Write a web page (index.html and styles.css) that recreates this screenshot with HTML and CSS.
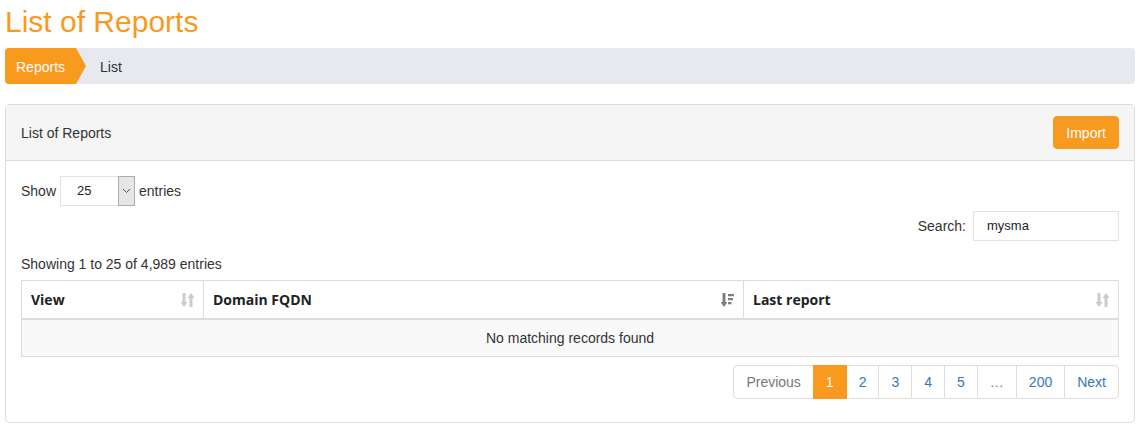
FILE: index.html
```html
<!DOCTYPE html>
<html>
<head>
<meta charset="utf-8">
<link rel="stylesheet" href="styles.css">
</head>
<body>
<div class="page">
  <h1 class="title">List of Reports</h1>
  <div class="crumbs">
    <span class="crumb-active">Reports</span>
    <span class="crumb">List</span>
  </div>
  <div class="panel">
    <div class="panel-head">
      <span class="panel-title">List of Reports</span>
      <button class="btn-import">Import</button>
    </div>
    <div class="panel-body">
      <div class="length-row">
        <span>Show</span>
        <div class="fake-select">
          <span class="sel-val">25</span>
          <span class="sel-arrow"><svg width="9" height="6" viewBox="0 0 9 6"><path d="M1 1 L4.5 4.5 L8 1" fill="none" stroke="#555" stroke-width="1"/></svg></span>
        </div>
        <span>entries</span>
      </div>
      <div class="search-row">
        <label class="search-label">Search:</label>
        <div class="search-input">mysma</div>
      </div>
      <div class="info">Showing 1 to 25 of 4,989 entries</div>
      <table class="grid">
        <thead>
          <tr>
            <th class="c1"><div class="th-in"><span>View</span>
              <svg class="sort both" width="13" height="14" viewBox="0 0 13 14"><path d="M1.5 0h3v9h2l-3.5 5l-3.5-5h2z M8.5 14h3V5h2l-3.5-5l-3.5 5h2z" fill="#000"/></svg></div></th>
            <th class="c2"><div class="th-in"><span>Domain FQDN</span>
              <svg class="sort desc" width="13" height="14" viewBox="0 0 13 14"><path d="M1.5 0h3v9h2l-3.5 5l-3.5-5h2z M7 1h6v2.2H7z M7 5h5v2.2H7z M7 9h3.5v2.2H7z" fill="#000"/></svg></div></th>
            <th class="c3"><div class="th-in"><span>Last report</span>
              <svg class="sort both" width="13" height="14" viewBox="0 0 13 14"><path d="M1.5 0h3v9h2l-3.5 5l-3.5-5h2z M8.5 14h3V5h2l-3.5-5l-3.5 5h2z" fill="#000"/></svg></div></th>
          </tr>
        </thead>
        <tbody>
          <tr><td colspan="3" class="empty">No matching records found</td></tr>
        </tbody>
      </table>
      <div class="pager-row">
        <ul class="pager">
          <li class="disabled">Previous</li>
          <li class="active">1</li>
          <li>2</li>
          <li>3</li>
          <li>4</li>
          <li>5</li>
          <li class="disabled">…</li>
          <li>200</li>
          <li>Next</li>
        </ul>
      </div>
    </div>
  </div>
</div>
</body>
</html>
```
FILE: styles.css
```css
* { box-sizing: border-box; }
html, body { margin: 0; padding: 0; background: #fff; }
body {
  font-family: "Liberation Sans", Arial, sans-serif;
  font-size: 14px;
  line-height: 20px;
  color: #333;
}
.page { padding: 0 7px 0 5px; }
.title {
  margin: 2px 0 6px 0;
  font-size: 30px;
  line-height: 40px;
  font-weight: normal;
  color: #f89a1e;
}
.crumbs {
  display: flex;
  align-items: center;
  height: 36px;
  background: #e6e9ed;
  border-radius: 4px;
}
.crumb-active {
  position: relative;
  display: flex;
  align-items: center;
  height: 36px;
  padding: 1px 11px 0 11px;
  background: #f89a1e;
  color: #fff;
  border-radius: 4px 0 0 4px;
}
.crumb-active::after {
  content: "";
  position: absolute;
  left: 100%;
  top: 0;
  border-top: 18px solid transparent;
  border-bottom: 18px solid transparent;
  border-left: 10px solid #f89a1e;
}
.crumb { margin-left: 24px; padding-top: 1px; color: #333; }
.panel {
  margin-top: 20px;
  border: 1px solid #ddd;
  border-radius: 4px;
}
.panel-head {
  display: flex;
  justify-content: space-between;
  align-items: center;
  height: 56px;
  padding: 0 15px;
  background: #f5f5f5;
  border-bottom: 1px solid #ddd;
  border-radius: 3px 3px 0 0;
}
.btn-import {
  font-family: inherit;
  font-size: 14px;
  line-height: 20px;
  height: 33px;
  padding: 0 12px;
  background: #f89a1e;
  border: 1px solid #f89a1e;
  border-radius: 4px;
  color: #fff;
}
.panel-body { padding: 15px 15px 15px 15px; }
.length-row {
  display: flex;
  align-items: center;
  gap: 4px;
  height: 30px;
}
.fake-select {
  display: flex;
  width: 75px;
  height: 30px;
  border: 1px solid #e3e3e3;
  background: #fff;
}
.sel-val {
  flex: 1;
  font-size: 13px;
  line-height: 28px;
  padding-left: 16px;
  color: #222;
}
.sel-arrow {
  width: 17px;
  display: flex;
  align-items: center;
  justify-content: center;
  background: #e6e6e6;
  border: 1px solid #adadad;
  margin: -1px -1px -1px 0;
}
.search-row {
  display: flex;
  justify-content: flex-end;
  align-items: center;
  gap: 7px;
  margin-top: 5px;
}
.search-input {
  width: 146px;
  height: 30px;
  border: 1px solid #e3e3e3;
  font-size: 13px;
  line-height: 28px;
  padding-left: 13px;
  color: #222;
}
.info { margin-top: 13px; height: 20px; }
.grid {
  margin-top: 6px;
  width: 100%;
  border-collapse: collapse;
  border: 1px solid #ddd;
}
.grid th {
  font-family: "Open Sans", "DejaVu Sans", sans-serif;
  font-size: 14px;
  font-weight: bold;
  text-align: left;
  padding: 8px 9px;
  line-height: 21px;
  border: 1px solid #ddd;
  border-bottom: 2px solid #ddd;
  color: #222;
}
.c1 { width: 182px; }
.c2 { width: 540px; }
.th-in {
  display: flex;
  justify-content: space-between;
  align-items: center;
}
.sort.both { opacity: 0.2; }
.sort.desc { opacity: 0.5; }
.empty {
  text-align: center;
  padding: 8px;
  background: #f9f9f9;
  border: 1px solid #ddd;
}
.pager-row {
  display: flex;
  justify-content: flex-end;
  margin-top: 8px;
  margin-bottom: 8px;
}
.pager {
  display: flex;
  list-style: none;
  margin: 0;
  padding: 0;
}
.pager li {
  padding: 6px 12px;
  line-height: 20px;
  border: 1px solid #ddd;
  margin-left: -1px;
  color: #337ab7;
  background: #fff;
}
.pager li:first-child { border-radius: 4px 0 0 4px; margin-left: 0; }
.pager li:last-child { border-radius: 0 4px 4px 0; }
.pager li.disabled { color: #777; }
.pager li.active {
  background: #f89a1e;
  border-color: #f89a1e;
  color: #fff;
  position: relative;
}
```
